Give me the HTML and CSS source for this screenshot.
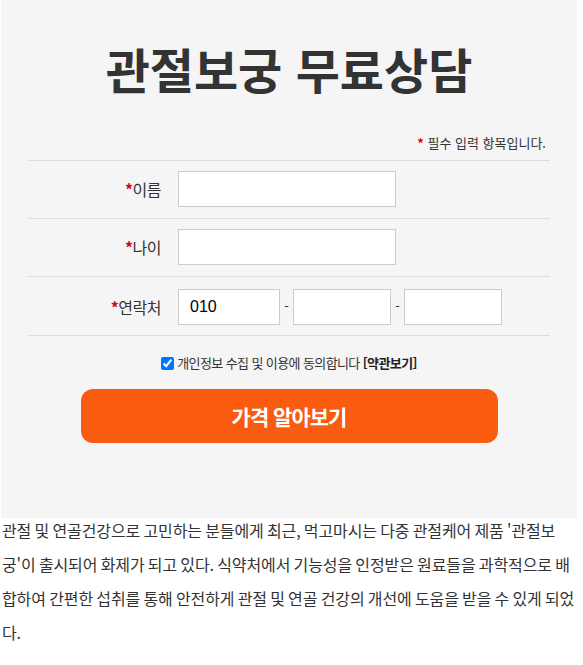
FILE: index.html
```html
<!DOCTYPE html>
<html lang="ko">
<head>
    <meta charset="UTF-8">
    <meta name="viewport" content="width=device-width, initial-scale=1.0">
    <title>관절보궁 무료상담</title>
    <link rel="stylesheet" href="styles.css">
</head>
<body>
    <!-- Consult form -->
    <div class="consult">
        <h1 class="consult-title">관절보궁 무료상담</h1>
        <p class="required-note"><span class="star">*</span> 필수 입력 항목입니다.</p>

        <div class="form-table">
            <div class="form-row">
                <label class="form-label" for="userName"><span class="star">*</span>이름</label>
                <input type="text" id="userName" class="input-wide">
            </div>
            <div class="form-row">
                <label class="form-label" for="userAge"><span class="star">*</span>나이</label>
                <input type="text" id="userAge" class="input-wide">
            </div>
            <div class="form-row">
                <label class="form-label" for="phone1"><span class="star">*</span>연락처</label>
                <input type="text" id="phone1" class="input-phone first" value="010">
                <span class="dash">-</span>
                <input type="text" id="phone2" class="input-phone">
                <span class="dash">-</span>
                <input type="text" id="phone3" class="input-phone">
            </div>
        </div>

        <div class="agree">
            <input type="checkbox" id="agreeCheck" checked>
            <label for="agreeCheck">개인정보 수집 및 이용에 동의합니다 <b>[약관보기]</b></label>
        </div>

        <button class="submit-btn" type="button">가격 알아보기</button>
    </div>

    <!-- Article text -->
    <p class="article">관절 및 연골건강으로 고민하는 분들에게 최근, 먹고마시는 다중 관절케어 제품 '관절보궁'이 출시되어 화제가 되고 있다. 식약처에서 기능성을 인정받은 원료들을 과학적으로 배합하여 간편한 섭취를 통해 안전하게 관절 및 연골 건강의 개선에 도움을 받을 수 있게 되었다.</p>
</body>
</html>
```

FILE: styles.css
```css
/* Basic Styles */
body {
    margin: 0;
    font-family: "Noto Sans CJK KR", "Noto Sans", sans-serif;
    color: #333;
    background: #fff;
}

.consult {
    width: 576px;
    margin-left: 1px;
    padding: 38px 27px 75px;
    box-sizing: border-box;
    background-color: #f5f5f5;
}

.consult-title {
    margin: 0;
    font-size: 48px;
    line-height: 60px;
    font-weight: bold;
    text-align: center;
    color: #333;
}

.required-note {
    margin: 35px 0 7px;
    padding-right: 4px;
    font-size: 13px;
    line-height: 20px;
    text-align: right;
}

.star {
    color: #e60012;
    font-weight: bold;
}

/* Form rows */
.form-table {
    border-top: 1px solid #ddd;
}

.form-row {
    display: flex;
    align-items: center;
    padding: 10px 0 11px;
    border-bottom: 1px solid #ddd;
}

.form-row:last-child {
    padding: 12px 0 10px;
}

.form-label {
    width: 133px;
    margin-right: 17px;
    font-size: 16px;
    text-align: right;
    letter-spacing: -0.5px;
}

.form-row input {
    height: 36px;
    margin: 0;
    padding: 0 11px;
    box-sizing: border-box;
    border: 1px solid #ccc;
    background: #fff;
    font-family: "Liberation Sans", Arial, sans-serif;
    font-size: 16px;
    color: #000;
}

.input-wide {
    width: 218px;
}

.input-phone {
    width: 98px;
}

.input-phone.first {
    width: 102px;
}

.dash {
    width: 13px;
    font-size: 13px;
    text-align: center;
    margin-top: -4px;
}

/* Agreement */
.agree {
    display: flex;
    justify-content: center;
    align-items: center;
    margin-top: 18px;
    font-size: 13px;
    line-height: 18px;
    letter-spacing: -0.6px;
}

.agree input {
    width: 13px;
    height: 13px;
    margin: 0 3px 0 0;
}

.agree b {
    font-weight: bold;
    color: #222;
}

/* Submit */
.submit-btn {
    display: block;
    width: 417px;
    height: 54px;
    margin: 17px auto 0;
    border: none;
    border-radius: 12px;
    background-color: #f95b11;
    color: #fff;
    font-family: inherit;
    font-size: 21px;
    font-weight: bold;
    letter-spacing: -1px;
    cursor: pointer;
}

/* Article */
.article {
    margin: -5px 0 0;
    padding: 0 8px 0 2px;
    font-size: 16px;
    line-height: 34px;
    letter-spacing: -0.1px;
    word-spacing: -1.1px;
    word-break: break-all;
    color: #333;
}
```
